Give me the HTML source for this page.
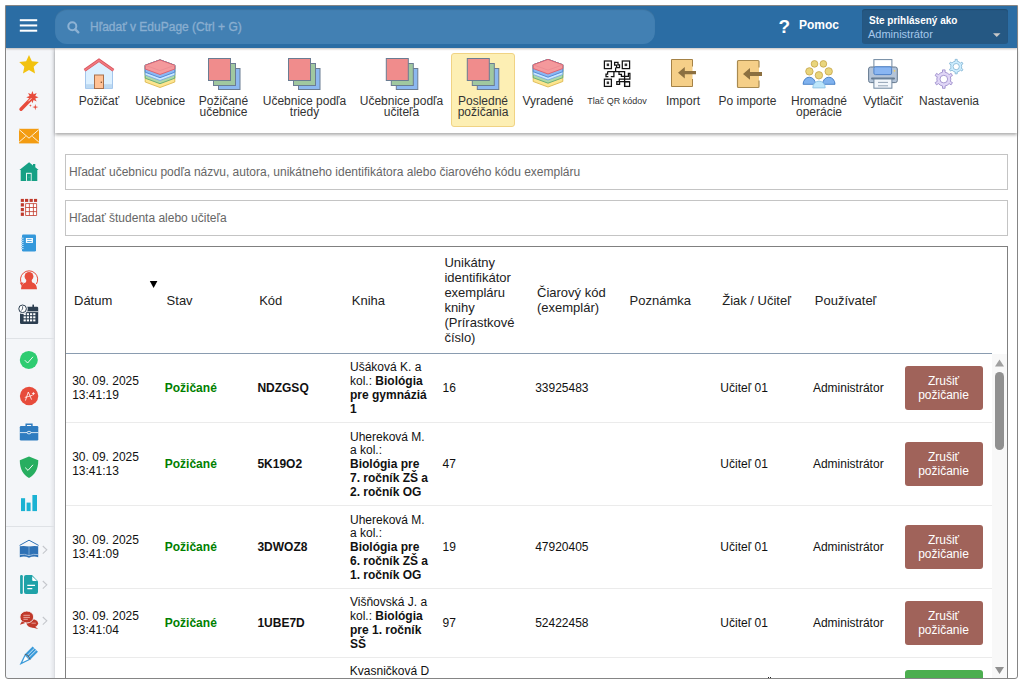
<!DOCTYPE html>
<html><head><meta charset="utf-8">
<style>
*{box-sizing:border-box;margin:0;padding:0}
html,body{width:1023px;height:684px;overflow:hidden;background:#fff;font-family:"Liberation Sans",sans-serif;color:#222}
.a{position:absolute}
#hdr{left:6px;top:6px;width:1011px;height:42px;background:#2b6da4;box-shadow:0 1px 2px rgba(60,40,30,.3);z-index:5}
#srch{left:55px;top:9px;width:600px;height:35px;border-radius:12px;background:#4280b3;box-shadow:inset 0 1px 1px rgba(0,0,0,.12)}
#srchtxt{left:90px;top:20px;font-size:12px;line-height:14px;color:#89aed0;-webkit-text-stroke:0.35px #89aed0;white-space:nowrap}
#pomoc{left:799px;top:17px;font-size:12px;font-weight:bold;color:#fff;line-height:16px}
#qm{left:778.5px;top:16.5px;font-size:19px;font-weight:bold;color:#fff;line-height:20px}
#user{left:862px;top:9px;width:146px;height:35px;border-radius:3px;background:#255883;box-shadow:inset 0 1px 1px rgba(0,0,0,.15)}
#ste{left:869px;top:15px;font-size:10px;font-weight:bold;color:#fff;line-height:12px;white-space:nowrap}
#adm{left:868px;top:28px;font-size:11px;color:#a6c8ec;line-height:13px;white-space:nowrap}
#side{left:6px;top:48px;width:49px;height:630px;background:linear-gradient(to right,#f4f6f9 0,#f4f6f9 44px,#e6e8ec 47.5px,#d6d8dc 49px)}
.sep{left:6px;width:48px;height:1px;background:#dfe2e6}
#tb{left:55px;top:48px;width:962px;height:85px;background:#fff;box-shadow:0 2px 3px rgba(0,0,0,.32)}
#hl{left:451px;top:53px;width:64px;height:74px;background:#fdefb4;border:1px solid #f0d384;border-radius:3px}
.lbl{top:96px;font-size:12px;line-height:11px;color:#333;text-align:center;white-space:nowrap;transform:translateX(-50%)}
.inp{left:65px;width:943px;height:36px;border:1px solid #c4c4c4;background:#fff}
.inpt{left:69px;font-size:12px;line-height:14px;color:#666;white-space:nowrap}
#tbl{left:65px;top:246px;width:943px;height:433px;border:1px solid #808080;border-bottom:none;overflow:hidden;background:#fff}
.th{font-size:13px;line-height:15px;color:#222;white-space:nowrap}
.td{font-size:12px;line-height:13.8px;color:#111;white-space:nowrap}
.btn{position:relative;left:-1px;top:-1px;width:78px;height:44px;border-radius:3px;background:#a0635a;color:#fff;font-size:12px;line-height:13.8px;text-align:center;padding-top:9px}
#thead{left:1px;top:0;width:926px;height:106px}
#sortarr{left:83px;top:33px;font-size:9px;line-height:10px;color:#111}
#hline{left:0;top:106px;width:926px;height:1px;background:#8a9cb0}
.row{left:0;width:926px;display:flex;align-items:center;border-bottom:1px solid #ebebeb;box-sizing:content-box}
.c{flex:none;width:92.6px;padding-left:6.2px;position:relative;top:1px}
.g{color:#008000;font-weight:bold}
#sbtrack{left:926px;top:107px;width:15px;height:330px;background:#f8f8f8}
#srch,#srchtxt,#qm,#pomoc,#user,#ste,#adm{z-index:6}
#frame{left:5px;top:5px;width:1013px;height:674px;border:1px solid #858585;border-radius:0 0 3px 3px;z-index:50;pointer-events:none}
#icons{left:0;top:0;z-index:10}
</style></head><body>
<div class="a" id="hdr"></div>
<div class="a" id="srch" style="z-index:6"></div>
<div class="a" id="srchtxt">Hľadať v EduPage (Ctrl + G)</div>
<div class="a" id="qm">?</div>
<div class="a" id="pomoc">Pomoc</div>
<div class="a" id="user"></div>
<div class="a" id="ste">Ste prihlásený ako</div>
<div class="a" id="adm">Administrátor</div>

<div class="a" id="side"></div>
<div class="a sep" style="top:338px"></div>
<div class="a sep" style="top:526px"></div>

<div class="a" id="tb"></div>
<div class="a" id="hl"></div>
<div class="a lbl" style="left:99px">Požičať</div>
<div class="a lbl" style="left:160.2px">Učebnice</div>
<div class="a lbl" style="left:223.5px">Požičané<br>učebnice</div>
<div class="a lbl" style="left:304.5px">Učebnice podľa<br>triedy</div>
<div class="a lbl" style="left:401.5px">Učebnice podľa<br>učiteľa</div>
<div class="a lbl" style="left:483px">Posledné<br>požičania</div>
<div class="a lbl" style="left:548px">Vyradené</div>
<div class="a lbl" style="left:617px;font-size:9px">Tlač QR kódov</div>
<div class="a lbl" style="left:683px">Import</div>
<div class="a lbl" style="left:747.5px">Po importe</div>
<div class="a lbl" style="left:819px">Hromadné<br>operácie</div>
<div class="a lbl" style="left:883px">Vytlačiť</div>
<div class="a lbl" style="left:949px">Nastavenia</div>

<div class="a inp" style="top:154px"></div>
<div class="a inpt" style="top:165px">Hľadať učebnicu podľa názvu, autora, unikátneho identifikátora alebo čiarového kódu exempláru</div>
<div class="a inp" style="top:200px"></div>
<div class="a inpt" style="top:211px">Hľadať študenta alebo učiteľa</div>

<div class="a" id="tbl"><div class="a" id="thead"><div class="a th" style="left:7.0px;top:45.5px">Dátum</div><div class="a th" style="left:99.6px;top:45.5px">Stav</div><div class="a th" style="left:192.2px;top:45.5px">Kód</div><div class="a th" style="left:284.8px;top:45.5px">Kniha</div><div class="a th" style="left:377.4px;top:8.0px">Unikátny<br>identifikátor<br>exempláru<br>knihy<br>(Prírastkové<br>číslo)</div><div class="a th" style="left:470.0px;top:38.0px">Čiarový kód<br>(exemplár)</div><div class="a th" style="left:562.6px;top:45.5px">Poznámka</div><div class="a th" style="left:655.2px;top:45.5px">Žiak / Učiteľ</div><div class="a th" style="left:747.8px;top:45.5px">Používateľ</div></div><div class="a" id="hline"></div><div class="a row" style="top:107px;height:68px"><div class="c td">30. 09. 2025<br>13:41:19</div><div class="c td"><span class=g>Požičané</span></div><div class="c td"><b>NDZGSQ</b></div><div class="c td">Ušáková K. a<br>kol.: <b>Biológia</b><br><b>pre gymnáziá</b><br><b>1</b></div><div class="c td">16</div><div class="c td">33925483</div><div class="c td"></div><div class="c td">Učiteľ 01</div><div class="c td">Administrátor</div><div class="c"><div class="btn">Zrušiť<br>požičanie</div></div></div><div class="a row" style="top:176px;height:82px"><div class="c td">30. 09. 2025<br>13:41:13</div><div class="c td"><span class=g>Požičané</span></div><div class="c td"><b>5K19O2</b></div><div class="c td">Uhereková M.<br>a kol.:<br><b>Biológia pre<br>7. ročník ZŠ a<br>2. ročník OG</b></div><div class="c td">47</div><div class="c td"></div><div class="c td"></div><div class="c td">Učiteľ 01</div><div class="c td">Administrátor</div><div class="c"><div class="btn">Zrušiť<br>požičanie</div></div></div><div class="a row" style="top:259px;height:82px"><div class="c td">30. 09. 2025<br>13:41:09</div><div class="c td"><span class=g>Požičané</span></div><div class="c td"><b>3DWOZ8</b></div><div class="c td">Uhereková M.<br>a kol.:<br><b>Biológia pre<br>6. ročník ZŠ a<br>1. ročník OG</b></div><div class="c td">19</div><div class="c td">47920405</div><div class="c td"></div><div class="c td">Učiteľ 01</div><div class="c td">Administrátor</div><div class="c"><div class="btn">Zrušiť<br>požičanie</div></div></div><div class="a row" style="top:342px;height:68px"><div class="c td">30. 09. 2025<br>13:41:04</div><div class="c td"><span class=g>Požičané</span></div><div class="c td"><b>1UBE7D</b></div><div class="c td">Višňovská J. a<br>kol.: <b>Biológia</b><br><b>pre 1. ročník</b><br><b>SŠ</b></div><div class="c td">97</div><div class="c td">52422458</div><div class="c td"></div><div class="c td">Učiteľ 01</div><div class="c td">Administrátor</div><div class="c"><div class="btn">Zrušiť<br>požičanie</div></div></div><div class="a td" style="left:283.8px;top:418px">Kvasničková D</div><div class="a" style="left:839px;top:423px;width:77.5px;height:30px;border-radius:3px;background:#4cae4f"></div><div class="a" style="left:702px;top:430px;width:1px;height:1px;background:#222"></div><div class="a" style="left:704px;top:430px;width:1px;height:1px;background:#222"></div><div class="a" id="sbtrack"></div><svg class="a" style="left:926px;top:107px" width="15" height="326"><path d="M3,12.5 L7.5,5.5 L12,12.5 Z" fill="#a0a0a0"/><rect x="3" y="18" width="9" height="78" rx="4.5" fill="#909090"/><path d="M3,313 L7.5,320 L12,313 Z" fill="#909090"/></svg></div>

<svg class="a" id="icons" width="1023" height="684">
<g fill="#fff"><rect x="19.8" y="19.2" width="17.4" height="2"/><rect x="19.8" y="24.45" width="17.4" height="2"/><rect x="19.8" y="29.7" width="17.4" height="2"/></g>
<g stroke="#8db2d4" fill="none" stroke-width="2"><circle cx="72.3" cy="26.3" r="4"/><path d="M75.3,29.3 L78.3,32.3" stroke-width="2.4" stroke-linecap="round"/></g>
<path d="M993,33.2 L1000.5,33.2 L996.75,37 Z" fill="#c8c8c8"/>
<!-- star -->
<path d="M29.00,54.90 L31.88,61.24 L38.80,62.02 L33.66,66.71 L35.05,73.53 L29.00,70.10 L22.95,73.53 L24.34,66.71 L19.20,62.02 L26.12,61.24 Z" fill="#f2c20f"/>
<!-- wand -->
<path d="M32.40,91.10 L33.59,94.34 L36.71,92.89 L35.26,96.01 L38.50,97.20 L35.26,98.39 L36.71,101.51 L33.59,100.06 L32.40,103.30 L31.21,100.06 L28.09,101.51 L29.54,98.39 L26.30,97.20 L29.54,96.01 L28.09,92.89 L31.21,94.34 Z" fill="#e74c3c"/>
<path d="M21,109.3 L31,99" stroke="#e74c3c" stroke-width="3.4" stroke-linecap="round"/>
<path d="M28.4,101.3 L31.4,98.2" stroke="#fff" stroke-width="0.9"/>
<path d="M35.30,104.00 L35.94,106.46 L38.40,107.10 L35.94,107.74 L35.30,110.20 L34.66,107.74 L32.20,107.10 L34.66,106.46 Z" fill="#e74c3c"/>
<path d="M30.40,104.20 L30.75,105.25 L31.80,105.60 L30.75,105.95 L30.40,107.00 L30.05,105.95 L29.00,105.60 L30.05,105.25 Z" fill="#e74c3c"/>
<!-- envelope -->
<rect x="19" y="128.8" width="20" height="14.6" fill="#f39c12"/>
<path d="M19.2,129.6 L29,138.2 L38.8,129.6 M19.2,142 L25.6,136.4 M38.8,142 L32.4,136.4" fill="none" stroke="#fff" stroke-width="0.85"/>
<!-- house green -->
<path d="M19.4,169.9 L29.1,162.3 L33,165.4 V163.9 H35.3 V167.3 L38.6,169.9 H37.3 V180.9 H20.7 V169.9 Z" fill="#16a085"/>
<rect x="26.1" y="172.8" width="5.5" height="8.1" fill="#fff"/>
<rect x="27" y="173.8" width="3.8" height="7.1" fill="#16a085"/>
<rect x="28.6" y="176.8" width="0.8" height="0.8" fill="#6fc8b4"/>
<!-- grid calendar -->
<g fill="#c0392b">
<rect x="20.8" y="198.9" width="3.1" height="3"/><rect x="25" y="198.9" width="3.2" height="3"/><rect x="29.6" y="198.9" width="3.2" height="3"/><rect x="34" y="198.9" width="3.1" height="3"/>
<rect x="20.8" y="203.2" width="3.1" height="3.3"/><rect x="20.8" y="208" width="3.1" height="3.2"/><rect x="20.8" y="212.6" width="3.1" height="3.3"/>
</g>
<path d="M25.6,203.6 H36.6 V215.5 H25.6 Z M29.4,203.6 V215.5 M33.4,203.6 V215.5 M25.6,207.5 H36.6 M25.6,211.6 H36.6" fill="#fff" stroke="#c0392b" stroke-width="0.8"/>
<!-- notebook -->
<rect x="22" y="234.6" width="14" height="17" rx="1.4" fill="#3498db"/>
<rect x="25.9" y="238" width="7" height="4.9" fill="#fff"/>
<path d="M27.2,239.4 H31.7 M27.2,241.5 H31.7" stroke="#3498db" stroke-width="0.8"/>
<path d="M20.9,238.2 H23.6 M20.9,240.3 H23.6 M20.9,242.4 H23.6 M20.9,244.4 H23.6 M20.9,246.5 H23.6 M20.9,248.6 H23.6" stroke="#fff" stroke-width="0.7"/>
<path d="M21,238.2 H22 M21,240.3 H22 M21,242.4 H22 M21,244.4 H22 M21,246.5 H22 M21,248.6 H22" stroke="#3498db" stroke-width="0.5"/>
<!-- person -->
<circle cx="29" cy="276.4" r="4.4" fill="#e74c3c"/>
<path d="M26.4,279.5 L26,282.3 C22.6,283.3 21.1,285.6 21,289.2 H37 C36.9,285.6 35.4,283.3 32,282.3 L31.6,279.5 Z" fill="#e74c3c"/>
<path d="M21.8,284 A8.6,8.6 0 1 1 36.4,284" fill="none" stroke="#e74c3c" stroke-width="1"/>
<path d="M19.8,282.8 L23.6,282.6 L21.6,286 Z" fill="#e74c3c"/>
<!-- calendar clock -->
<rect x="20" y="306.8" width="18.2" height="17.2" rx="1.2" fill="#2c3e50"/>
<rect x="32.4" y="304.6" width="1.6" height="3" fill="#2c3e50"/>
<path d="M24,311.6 H38.2" stroke="#fff" stroke-width="0.7"/>
<g fill="#fff">
<rect x="23.6" y="313.2" width="2.2" height="2"/><rect x="26.8" y="313.2" width="2.2" height="2"/><rect x="30" y="313.2" width="2.2" height="2"/><rect x="33.2" y="313.2" width="2.2" height="2"/>
<rect x="23.6" y="316.3" width="2.2" height="2"/><rect x="26.8" y="316.3" width="2.2" height="2"/><rect x="30" y="316.3" width="2.2" height="2"/><rect x="33.2" y="316.3" width="2.2" height="2"/>
<rect x="23.6" y="319.4" width="2.2" height="2"/><rect x="26.8" y="319.4" width="2.2" height="2"/><rect x="30" y="319.4" width="2.2" height="2"/><rect x="33.2" y="319.4" width="2.2" height="2"/>
</g>
<circle cx="22.6" cy="308.8" r="5.2" fill="#f4f6f9"/>
<circle cx="22.6" cy="308.8" r="3.8" fill="#fff" stroke="#2c3e50" stroke-width="1"/>
<path d="M22.6,306.3 V309 L21.2,310.6" fill="none" stroke="#2c3e50" stroke-width="0.8"/>
<!-- badge check -->
<circle cx="28.8" cy="359.9" r="9" fill="#2ecc71"/>
<path d="M24.8,360.2 L27.6,363 L33,356.8" fill="none" stroke="#fff" stroke-width="0.9"/>
<!-- A+ -->
<circle cx="29.1" cy="396" r="9.2" fill="#e74c3c"/>
<path d="M25.4,400.6 L28.3,392 L31.6,399.6 M24.8,397.4 C27.5,396.8 30,396.2 32.6,395.2 M31.9,393.6 H34.9 M33.4,392.1 V395.1" fill="none" stroke="#fff" stroke-width="0.8"/>
<!-- briefcase -->
<rect x="19.8" y="426" width="18.5" height="14.4" rx="1.2" fill="#2f7cc0"/>
<path d="M26.2,426.2 V424.3 H31.9 V426.2" fill="none" stroke="#2f7cc0" stroke-width="1.5"/>
<path d="M19.8,432.6 H38.3" stroke="#fff" stroke-width="0.8"/>
<ellipse cx="29" cy="432.6" rx="1.9" ry="1.3" fill="#2f7cc0" stroke="#fff" stroke-width="0.8"/>
<!-- shield -->
<path d="M29,456.5 L38.3,460.2 C38.3,469.5 34.5,474.8 29,478.1 C23.5,474.8 19.8,469.5 19.8,460.2 Z" fill="#27ae60"/>
<path d="M25.2,467.6 L28,470.4 L33,464.8" fill="none" stroke="#fff" stroke-width="0.95"/>
<!-- bars -->
<rect x="21" y="498.2" width="4.1" height="12.9" fill="#1bb2d3"/>
<rect x="26.6" y="502.6" width="4" height="8.5" fill="#1bb2d3"/>
<rect x="32.4" y="495" width="4.6" height="16.1" fill="#1bb2d3"/>
<!-- book -->
<path d="M19.6,545.4 L29,540.2 L38.6,545.4" fill="none" stroke="#2e71b5" stroke-width="1"/>
<path d="M19.8,546.3 Q24,545.4 29,546.6 Q34,545.4 38.2,546.3 V557.2 Q33.5,555.6 29,557.8 Q24.5,555.6 19.8,557.2 Z" fill="#2e71b5"/>
<path d="M29,546.8 V556" stroke="#7eaad6" stroke-width="0.9"/>
<path d="M19.8,554.6 Q24.5,553.6 29,555.6 Q33.5,553.6 38.2,554.6" fill="none" stroke="#c6d8ec" stroke-width="0.7"/>
<!-- doc -->
<rect x="20.1" y="575" width="2.7" height="19" rx="1.2" fill="#1fa2a8"/>
<path d="M26,575 H32 L38,581.3 V592 Q38,594 36,594 H26 Q24,594 24,592 V577 Q24,575 26,575 Z" fill="#1fa2a8"/>
<path d="M32.2,576.2 L32.2,580 Q32.2,581 33.2,581 L37,581 Z" fill="#fff"/>
<path d="M27.3,585.4 H35 M27.3,588.6 H32.3" stroke="#fff" stroke-width="1.2"/>
<!-- chat -->
<ellipse cx="32.3" cy="623.3" rx="5.8" ry="4.1" fill="#c0392b"/>
<path d="M34.5,626.3 L38.2,628.9 L31.2,627.3 Z" fill="#c0392b"/>
<path d="M31.5,623.2 H35.8" stroke="#f2b4ac" stroke-width="0.8"/>
<ellipse cx="26.8" cy="617" rx="6.9" ry="6" fill="#c0392b" stroke="#f4f6f9" stroke-width="0.9"/>
<path d="M22,621.2 L19.9,624.7 L25.2,623 Z" fill="#c0392b"/>
<path d="M23.4,615.3 H29.9 M23.4,617.4 H29.9 M23.4,619.3 H27.8" stroke="#f4c4bc" stroke-width="0.8"/>
<!-- pencil -->
<path d="M24.84,654.36 L32.64,646.56 L37.96,651.84 L30.16,659.64 Z" fill="#3a9ad9"/>
<path d="M26.6,656.1 L34.4,648.3 M28.4,657.9 L36.2,650.1" stroke="#fff" stroke-width="0.75"/>
<path d="M24.84,654.36 L30.16,659.64 L19.6,665 Z" fill="#3a9ad9"/>
<path d="M25.3,656 L28.5,659.2 L22.4,662.2 Z" fill="#fff"/>
<path d="M24.9,654.3 L28.2,655.6 L30.1,659.6" fill="none" stroke="#5a5a5a" stroke-width="0.9"/>
<!-- chevrons -->
<path d="M42.8,546 L46.8,549.8 L42.8,553.6 M42.8,581 L46.8,584.8 L42.8,588.6 M42.8,617 L46.8,620.8 L42.8,624.6" fill="none" stroke="#c4c7cc" stroke-width="1.1"/>

<path d="M149.8,281 L157.4,281 L153.6,288 Z" fill="#000"/>
<!-- house -->
<path d="M85.5,69.5 L99,61 L112.5,69.5 L112.5,88.5 L85.5,88.5 Z" fill="#dcf0ff" stroke="#a4c6ec" stroke-width="1"/>
<rect x="86" y="84.2" width="26" height="4" fill="#bcd9f2"/>
<rect x="94.5" y="75" width="9" height="13.5" fill="#ffc296" stroke="#a8704c" stroke-width="1"/>
<circle cx="101.3" cy="82.3" r="0.75" fill="#7a4a2a"/>
<path d="M84.6,70.3 L99,60.3 L113.4,70.3" fill="none" stroke="#d9545c" stroke-width="3.2" stroke-linejoin="miter"/>
<path d="M84.6,70.3 L99,60.3 L113.4,70.3" fill="none" stroke="#f07a80" stroke-width="1.6" stroke-linejoin="miter"/>
<!-- books stack -->
<g id="bk" stroke-width="0.9" stroke-linejoin="round">
<path d="M145.2,65.3 L160,59.9 L174.8,65.3 L174.8,82 L160,87.5 L145.2,82 Z" fill="#fde58e" stroke="#dcb850"/>
<path d="M145.2,65.3 L160,59.9 L174.8,65.3 L174.8,78.2 L160,83.7 L145.2,78.2 Z" fill="#acd9a8" stroke="#62a872"/>
<path d="M145.2,65.3 L160,59.9 L174.8,65.3 L174.8,75 L160,80.5 L145.2,75 Z" fill="#cce8ff" stroke="#78a8e0"/>
<path d="M145.2,65.3 L160,59.9 L174.8,65.3 L174.8,72.2 L160,77.7 L145.2,72.2 Z" fill="#8ab8f4" stroke="#4c84d0"/>
<path d="M145.2,65.3 L160,59.9 L174.8,65.3 L174.8,69 L160,74.5 L145.2,69 Z" fill="#f4999c" stroke="#e05c66"/>
<path d="M145.2,65.3 L160,70.6 L174.8,65.3" fill="none" stroke="#e88a90" stroke-width="0.7"/>
</g>
<!-- squares -->
<g id="sq" stroke="#6b7c92" stroke-width="1">
<rect x="218.5" y="68.5" width="21.5" height="21" fill="#8cb8f0"/>
<rect x="213.5" y="63.5" width="22" height="22" fill="#a0c8a0"/>
<rect x="208.5" y="58.5" width="22" height="22" fill="#f08c8c"/>
</g>
<use href="#sq" x="80"/>
<use href="#sq" x="177.8"/>
<use href="#sq" x="258.8"/>
<use href="#bk" x="388" y="-0.5"/>
<!-- QR -->
<g fill="none" stroke="#111" stroke-width="1.25">
<rect x="604.4" y="61" width="7" height="7.6"/>
<rect x="622.3" y="61" width="7.3" height="7.6"/>
<rect x="604.4" y="79.2" width="7" height="7.2"/>
<rect x="624.6" y="81.8" width="5" height="4.6"/>
<path d="M614.6,62.3 H618 V64.9 H619.5 V67.6 H616.6 V65 H614.6 Z"/>
<path d="M615.6,67.6 V71.6 M607.6,71.6 H624.6 V86.4"/>
<path d="M607.6,71.6 V74.2 H606 V76.6 H608.4 M613.9,71.6 V76.6 H610.8"/>
<path d="M619,71.6 V74.3 H621.4 V76.3 H628.4 V73.4 H629.9 V79.1 H619.3 V81.6"/>
<path d="M616.8,81.6 H619.6 V84.4 H616.8 Z M619.6,81.6 H629.6"/>
</g>
<g fill="#333"><rect x="606.7" y="63.5" width="2.4" height="2.6"/><rect x="624.6" y="63.5" width="2.6" height="2.6"/><rect x="606.7" y="81.5" width="2.4" height="2.6"/></g>
<!-- import -->
<rect x="671.5" y="59.5" width="21" height="27" fill="#f5cf88"/>
<path d="M692.5,66.5 V59.5 H671.5 V86.5 H692.5 V79" fill="none" stroke="#a58246" stroke-width="1"/>
<path d="M678,72.7 L684.8,66.9 L684.8,71.1 L696,71.1 L696,74.3 L684.8,74.3 L684.8,78.6 Z" fill="#8c7040"/>
<!-- po importe -->
<rect x="737.5" y="60.5" width="21.5" height="27" rx="1" fill="#f5cf88"/>
<path d="M759,67.5 V61.5 Q759,60.5 758,60.5 H738.5 Q737.5,60.5 737.5,61.5 V86.5 Q737.5,87.5 738.5,87.5 H758 Q759,87.5 759,86.5 V80.5" fill="none" stroke="#a88a50" stroke-width="1.2"/>
<path d="M743,73.9 L750,68 L750,72 L762,72 L762,76 L750,76 L750,79.7 Z" fill="#8c7040"/>
<!-- people -->
<g stroke-width="0.9">
<path d="M803.1,84.3 A6.2,7.1 0 0 1 815.5,84.3 Z" fill="#80b2ee" stroke="#3f7bc4"/>
<path d="M822.6,84.3 A6.2,7.1 0 0 1 835,84.3 Z" fill="#80b2ee" stroke="#3f7bc4"/>
<path d="M812.8,87.9 A6.2,6.8 0 0 1 825.2,87.9 Z" fill="#bde6fb" stroke="#8dc3e3"/>
<g fill="#e9d57c" stroke="#c9aa52">
<circle cx="814.5" cy="63.9" r="3.3"/><circle cx="823.4" cy="63.9" r="3.3"/>
<circle cx="809.4" cy="71.4" r="3.7"/><circle cx="828.7" cy="71.4" r="3.7"/>
<circle cx="818.9" cy="75.3" r="3.7"/>
</g></g>
<!-- printer -->
<rect x="873.9" y="59.6" width="18" height="8" fill="#fff" stroke="#7088a0" stroke-width="1"/>
<rect x="868.6" y="67" width="28.7" height="15.6" rx="2" fill="#b4c4d8" stroke="#64788e" stroke-width="1"/>
<rect x="873.9" y="66.8" width="17.7" height="7.8" rx="1.5" fill="#8ab6f2" stroke="#4f82c8" stroke-width="1"/>
<circle cx="894.5" cy="70.8" r="0.9" fill="#f0d060"/>
<path d="M872,78.4 H894" stroke="#64788e" stroke-width="2" stroke-linecap="round"/>
<rect x="873.9" y="79" width="18" height="9.2" fill="#f2f6fb" stroke="#7088a0" stroke-width="1"/>
<path d="M878,82.4 H888 M878,85.8 H888" stroke="#94a4b6" stroke-width="1"/>
<!-- gears -->
<path fill-rule="evenodd" d="M940.30,73.04 L942.54,72.21 L942.49,69.89 L945.11,69.89 L945.06,72.21 L947.30,73.04 L949.13,74.57 L951.12,73.36 L952.43,75.63 L950.39,76.75 L950.80,79.10 L950.39,81.45 L952.43,82.57 L951.12,84.84 L949.13,83.63 L947.30,85.16 L945.06,85.99 L945.11,88.31 L942.49,88.31 L942.54,85.99 L940.30,85.16 L938.47,83.63 L936.48,84.84 L935.17,82.57 L937.21,81.45 L936.80,79.10 L937.21,76.75 L935.17,75.63 L936.48,73.36 L938.47,74.57 Z M947.60,79.10 A3.8,3.8 0 1 0 940.00,79.10 A3.8,3.8 0 1 0 947.60,79.10 Z" fill="#e0d6f6" stroke="#9484c6" stroke-width="0.8"/>
<path fill-rule="evenodd" d="M953.45,61.84 L955.21,61.19 L955.17,59.37 L957.23,59.37 L957.19,61.19 L958.95,61.84 L960.39,63.04 L961.94,62.10 L962.97,63.88 L961.38,64.75 L961.70,66.60 L961.38,68.45 L962.97,69.32 L961.94,71.10 L960.39,70.16 L958.95,71.36 L957.19,72.01 L957.23,73.83 L955.17,73.83 L955.21,72.01 L953.45,71.36 L952.01,70.16 L950.46,71.10 L949.43,69.32 L951.02,68.45 L950.70,66.60 L951.02,64.75 L949.43,63.88 L950.46,62.10 L952.01,63.04 Z M959.30,66.60 A3.1,3.1 0 1 0 953.10,66.60 A3.1,3.1 0 1 0 959.30,66.60 Z" fill="#cdeeff" stroke="#80b2d2" stroke-width="0.8"/>

</svg>
<div class="a" id="frame"></div>
</body></html>
